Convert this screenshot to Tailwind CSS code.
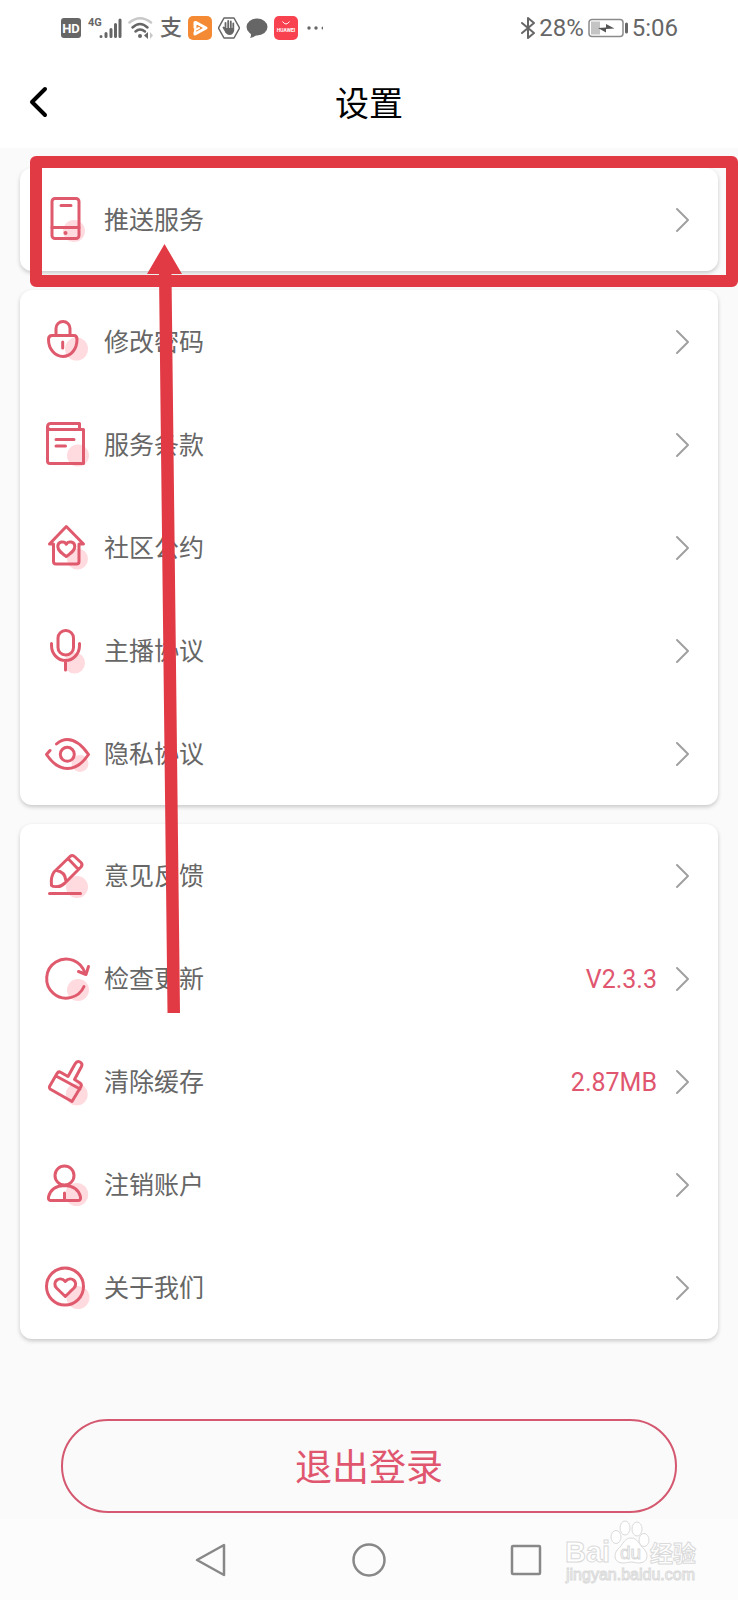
<!DOCTYPE html>
<html lang="zh-CN">
<head>
    <meta charset="UTF-8">
    <meta name="viewport" content="width=device-width, initial-scale=1.0">
    <title>设置</title>
    <script src="https://cdn.jsdelivr.net/npm/@tailwindcss/browser@4"></script>
</head>
<body class="min-h-screen flex flex-col bg-[#fafafa] font-[Roboto,'Noto_Sans_CJK_SC',sans-serif]">
    <!-- Shared icons -->
    <svg class="hidden">
        <symbol id="chevron" viewBox="0 0 16 28">
            <path d="M2 3l11 11L2 25" fill="none" stroke="#a0a0a0" stroke-width="2" stroke-linecap="round" stroke-linejoin="round"/>
        </symbol>
    </svg>

    <!-- Status bar -->
    <div class="bg-white h-14 px-[60px] flex items-center justify-between text-[#666]">
        <div class="flex items-center gap-[6px]">
            <svg class="w-[22px] h-6" viewBox="0 0 22 24">
                <rect x="1" y="2" width="20" height="20" rx="3" fill="#666"/>
                <text x="11" y="17" text-anchor="middle" font-family="Roboto" font-weight="700" font-size="13" fill="#fff">HD</text>
            </svg>
            <svg class="w-[34px] h-6" viewBox="0 0 34 24">
                <text x="0" y="10" font-family="Roboto" font-weight="700" font-size="11" fill="#666">4G</text>
                <path d="M13 20.500v0M18 20.500v-3M23 20.500v-7M27.500 20.500v-12M32 20.500v-16.500" stroke="#666" stroke-width="3" stroke-linecap="round"/>
            </svg>
            <svg class="w-[26px] h-6" viewBox="0 0 26 24" fill="none" stroke-width="2.500" stroke-linecap="round">
                <path d="M1.500 6.500Q12 -2 23 6.500" stroke="#c8c8c8"/>
                <path d="M4.500 11.500Q12 4.500 19.500 11.500M7.500 15.500Q12 11.500 17 15.500" stroke="#666"/>
                <circle cx="12" cy="20" r="2" fill="#666"/>
                <path d="M20 16v7l-4-3.500z" fill="#666"/>
                <path d="M22 16v7l3-3.500z" fill="#c8c8c8"/>
            </svg>
            <span class="w-[22px] text-[22px] leading-6 font-medium">支</span>
            <svg class="w-6 h-6" viewBox="0 0 24 24">
                <rect width="24" height="24" rx="5" fill="#f58a35"/>
                <path d="M7 6.500v5M7 16.500v1.500l11-6L8 6.500" fill="none" stroke="#fff" stroke-width="3" stroke-linecap="round" stroke-linejoin="round"/>
                <path d="M7 17v-3l4-2" fill="none" stroke="#fff" stroke-width="2" stroke-linecap="round"/>
            </svg>
            <svg class="w-[22px] h-6" viewBox="1 0 22 24">
                <path d="M7 2h10l5.500 10L17 22H7L1.500 12z" fill="none" stroke="#666" stroke-width="1.500" stroke-linejoin="round"/>
                <path d="M8.500 7v7M11.200 5v8M13.800 5.500v8M16.300 7.500v7M6.500 11.500l3 5" stroke="#666" stroke-width="1.800" stroke-linecap="round"/>
                <path d="M8 12h9v3q-1 4-4.500 4Q9.500 19 8 15z" fill="#666"/>
            </svg>
            <svg class="w-[22px] h-6" viewBox="0 0 22 24">
                <ellipse cx="11" cy="11" rx="10.500" ry="8.500" fill="#666"/>
                <path d="M4 16q2 3 0 6 5-1 7-4z" fill="#666"/>
            </svg>
            <svg class="w-6 h-6" viewBox="0 0 24 24">
                <rect width="24" height="24" rx="5" fill="#f8424f"/>
                <path d="M8.500 5.500q3.500 5 7 0" fill="none" stroke="#fff" stroke-width="1"/>
                <text x="12" y="16" text-anchor="middle" font-family="Roboto" font-weight="700" font-size="5" fill="#fff">HUAWEI</text>
            </svg>
            <svg class="w-7 h-6" viewBox="0 0 28 24" fill="#666">
                <circle cx="5" cy="12" r="1.700"/><circle cx="12" cy="12" r="1.700"/><path d="M19 10.500a1.500 1.500 0 0 0 0 3z"/>
            </svg>
        </div>
        <div class="flex items-center gap-[3px] text-2xl leading-6">
            <svg class="w-4 h-6" viewBox="0 0 16 24">
                <path d="M2 7l12 10-6 5V2l6 5L2 17" fill="none" stroke="#666" stroke-width="2" stroke-linejoin="round" stroke-linecap="round"/>
            </svg>
            <span>28%</span>
            <svg class="w-[42px] h-6" viewBox="0 0 42 24">
                <rect x="2" y="3.500" width="34" height="17" rx="3" fill="none" stroke="#8a8a8a" stroke-width="1.500"/>
                <rect x="4" y="5.500" width="9" height="13" fill="#c4c4c4"/>
                <path d="M11 12l8-.5V8l8.500 4.500-8.500.5v3.500z" fill="#555"/>
                <path d="M39.500 8v8" stroke="#666" stroke-width="3" stroke-linecap="round"/>
            </svg>
            <span>5:06</span>
        </div>
    </div>

    <!-- Header -->
    <header class="bg-white h-[92px] px-7 grid grid-cols-[24px_1fr_24px] items-center">
        <button type="button" aria-label="返回" class="w-6 h-9">
            <svg class="w-6 h-9" viewBox="0 0 24 36">
                <path d="M17 5L4 18l13 13" fill="none" stroke="#000" stroke-width="4" stroke-linecap="round" stroke-linejoin="round"/>
            </svg>
        </button>
        <h1 class="pt-1 text-center text-[34px] leading-10 text-black">设置</h1>
    </header>

    <!-- Settings -->
    <main class="relative flex-1 pt-5 pb-[6px] text-[25px] text-[#666]">
        <div class="px-5 flex flex-col gap-[19px]">
            <ul class="bg-white rounded-xl shadow-[0_2px_4px_rgba(0,0,0,0.2)]">
                <li>
                    <a href="#push" class="h-[103px] pl-6 pr-[27px] flex items-center">
                        <svg class="size-12" viewBox="0 0 48 48" fill="none" stroke="#e05a6d" stroke-width="3" stroke-linecap="round" stroke-linejoin="round">
                            <circle cx="30" cy="35" r="11" fill="#ffdbe0" stroke="none"/>
                            <rect x="8" y="2.500" width="27" height="40" rx="3"/>
                            <path d="M17 9.500h10M8 31.500h27"/>
                            <circle cx="21.500" cy="37" r="2" fill="#e05a6d" stroke="none"/>
                        </svg>
                        <span class="ml-3 pt-[2px] flex-1">推送服务</span>
                        <svg class="w-4 h-7"><use href="#chevron"/></svg>
                    </a>
                </li>
            </ul>

            <ul class="bg-white rounded-xl shadow-[0_2px_4px_rgba(0,0,0,0.2)]">
                <li>
                    <a href="#password" class="h-[103px] pl-6 pr-[27px] flex items-center">
                        <svg class="size-12" viewBox="0 0 48 48" fill="none" stroke="#e05a6d" stroke-width="3" stroke-linecap="round" stroke-linejoin="round">
                            <circle cx="32.500" cy="31" r="11.500" fill="#ffdbe0" stroke="none"/>
                            <path d="M12 17V10.500a7 7 0 0 1 14 0V17M8 17.500h22q3 0 3 4C33 31 27 38.500 19 38.500S4.500 31 4.500 21.500q0-4 3.500-4zM18.700 24v6"/>
                        </svg>
                        <span class="ml-3 pt-[2px] flex-1">修改密码</span>
                        <svg class="w-4 h-7"><use href="#chevron"/></svg>
                    </a>
                </li>
                <li>
                    <a href="#terms" class="h-[103px] pl-6 pr-[27px] flex items-center">
                        <svg class="size-12" viewBox="0 0 48 48" fill="none" stroke="#e05a6d" stroke-width="3" stroke-linecap="round" stroke-linejoin="round">
                            <circle cx="34" cy="34.500" r="11" fill="#ffdbe0" stroke="none"/>
                            <path d="M35.500 8V2.500H6.500a3 3 0 0 0 0 6H39.500V42.500H6a2.500 2.500 0 0 1-2.500-2.500V6M12 18.500h18M12 25h9.500"/>
                        </svg>
                        <span class="ml-3 pt-[2px] flex-1">服务条款</span>
                        <svg class="w-4 h-7"><use href="#chevron"/></svg>
                    </a>
                </li>
                <li>
                    <a href="#community" class="h-[103px] pl-6 pr-[27px] flex items-center">
                        <svg class="size-12" viewBox="0 0 48 48" fill="none" stroke="#e05a6d" stroke-width="3" stroke-linecap="round" stroke-linejoin="round">
                            <circle cx="33.500" cy="35" r="10.500" fill="#ffdbe0" stroke="none"/>
                            <path d="M9.500 20H5.500L22.300 2.500 39.500 20H35V37.500a2.500 2.500 0 0 1-2.500 2.500H12a2.500 2.500 0 0 1-2.500-2.500z"/>
                            <path d="M22.300 32.500c-5-3.500-8.500-6-8.500-10 0-5 6.500-6 8.500-2.300 2-3.700 8.500-2.700 8.500 2.300 0 4-3.500 6.500-8.500 10z"/>
                        </svg>
                        <span class="ml-3 pt-[2px] flex-1">社区公约</span>
                        <svg class="w-4 h-7"><use href="#chevron"/></svg>
                    </a>
                </li>
                <li>
                    <a href="#anchor" class="h-[103px] pl-6 pr-[27px] flex items-center">
                        <svg class="size-12" viewBox="0 0 48 48" fill="none" stroke="#e05a6d" stroke-width="3" stroke-linecap="round" stroke-linejoin="round">
                            <circle cx="30.500" cy="36" r="10.500" fill="#ffdbe0" stroke="none"/>
                            <rect x="14" y="3.500" width="15.500" height="24.500" rx="7.500"/>
                            <path d="M7.500 16.500v2a14 15 0 0 0 28 0v-2M21.500 33.500V43"/>
                        </svg>
                        <span class="ml-3 pt-[2px] flex-1">主播协议</span>
                        <svg class="w-4 h-7"><use href="#chevron"/></svg>
                    </a>
                </li>
                <li>
                    <a href="#privacy" class="h-[103px] pl-6 pr-[27px] flex items-center">
                        <svg class="size-12" viewBox="0 0 48 48" fill="none" stroke="#e05a6d" stroke-width="3" stroke-linecap="round" stroke-linejoin="round">
                            <circle cx="36" cy="33.500" r="8.500" fill="#ffdbe0" stroke="none"/>
                            <path d="M6 20.500L2.500 24.500Q12 38.500 23.500 38.500T44.500 24.500Q34 9.500 23.500 9.500 17.500 9.500 12.500 14"/>
                            <circle cx="23.300" cy="24.300" r="7"/>
                        </svg>
                        <span class="ml-3 pt-[2px] flex-1">隐私协议</span>
                        <svg class="w-4 h-7"><use href="#chevron"/></svg>
                    </a>
                </li>
            </ul>

            <ul class="bg-white rounded-xl shadow-[0_2px_4px_rgba(0,0,0,0.2)]">
                <li>
                    <a href="#feedback" class="h-[103px] pl-6 pr-[27px] flex items-center">
                        <svg class="size-12" viewBox="0 0 48 48" fill="none" stroke="#e05a6d" stroke-width="3" stroke-linecap="round" stroke-linejoin="round">
                            <circle cx="33" cy="35" r="11" fill="#ffdbe0" stroke="none"/>
                            <path d="M10 20L26 4.500q2.500-2 4.500 0l6.500 6q2 2 0 4.500L21 31q-4 3.500-7 3.500-5 .5-6.500-1Q6.500 25 10 20zM24.500 7l9.500 10M12.500 18.500q8.500 1 9.500 10.500M5.500 41.500h31"/>
                        </svg>
                        <span class="ml-3 pt-[2px] flex-1">意见反馈</span>
                        <svg class="w-4 h-7"><use href="#chevron"/></svg>
                    </a>
                </li>
                <li>
                    <a href="#update" class="h-[103px] pl-6 pr-[27px] flex items-center">
                        <svg class="size-12" viewBox="0 0 48 48" fill="none" stroke="#e05a6d" stroke-width="3" stroke-linecap="round" stroke-linejoin="round">
                            <circle cx="34" cy="35" r="11" fill="#ffdbe0" stroke="none"/>
                            <path d="M40 31.500A19.500 19.500 0 1 1 41 18.500M34.500 16.500L42 19.500 44.500 11.500"/>
                        </svg>
                        <span class="ml-3 pt-[2px] flex-1">检查更新</span>
                        <span class="mr-[18px] pt-[2px] text-[#e0566f]">V2.3.3</span>
                        <svg class="w-4 h-7"><use href="#chevron"/></svg>
                    </a>
                </li>
                <li>
                    <a href="#cache" class="h-[103px] pl-6 pr-[27px] flex items-center">
                        <svg class="size-12" viewBox="0 0 48 48" fill="none" stroke="#e05a6d" stroke-width="3" stroke-linecap="round" stroke-linejoin="round">
                            <circle cx="32.700" cy="36.500" r="11" fill="#ffdbe0" stroke="none"/>
                            <path d="M24 18.500L31 6q2-3.500 5-2t1.500 4.500L30.500 21.500 36 25q2 1.500 1 3.500L28 43.500 6 31q-1-1-.5-2.500L13 15.500q1.500-2.500 4-1zM12 18l24 13"/>
                        </svg>
                        <span class="ml-3 pt-[2px] flex-1">清除缓存</span>
                        <span class="mr-[18px] pt-[2px] text-[#e0566f]">2.87MB</span>
                        <svg class="w-4 h-7"><use href="#chevron"/></svg>
                    </a>
                </li>
                <li>
                    <a href="#account" class="h-[103px] pl-6 pr-[27px] flex items-center">
                        <svg class="size-12" viewBox="0 0 48 48" fill="none" stroke="#e05a6d" stroke-width="3" stroke-linecap="round" stroke-linejoin="round">
                            <circle cx="32.700" cy="33.500" r="11.500" fill="#ffdbe0" stroke="none"/>
                            <circle cx="20.500" cy="14.500" r="9.500"/>
                            <path d="M7 39.500q-3 0-2.500-3.500Q7 25 20.500 24.500 34 25 36.500 36q.5 3.500-2.500 3.500zM20.500 32v7"/>
                        </svg>
                        <span class="ml-3 pt-[2px] flex-1">注销账户</span>
                        <svg class="w-4 h-7"><use href="#chevron"/></svg>
                    </a>
                </li>
                <li>
                    <a href="#about" class="h-[103px] pl-6 pr-[27px] flex items-center">
                        <svg class="size-12" viewBox="0 0 48 48" fill="none" stroke="#e05a6d" stroke-width="3" stroke-linecap="round" stroke-linejoin="round">
                            <circle cx="34" cy="33.500" r="11.500" fill="#ffdbe0" stroke="none"/>
                            <circle cx="21" cy="22.500" r="18.500"/>
                            <path d="M21.300 32.500L12.500 24c-5-5.500 2.500-13 8.800-6.500 6.300-6.500 13.700 1 8.700 6.500z"/>
                        </svg>
                        <span class="ml-3 pt-[2px] flex-1">关于我们</span>
                        <svg class="w-4 h-7"><use href="#chevron"/></svg>
                    </a>
                </li>
            </ul>
        </div>

        <div class="mt-20 px-[61px]">
            <button type="button" class="w-full h-[94px] pt-[6px] rounded-full border-2 border-[#d4586f] text-[37px] text-[#e0566f]">退出登录</button>
        </div>

        <!-- Highlight box and arrow over the first row -->
        <div class="absolute top-2 left-[30px] right-0 h-[131px] border-12 border-[#e13a45] rounded-md pointer-events-none"></div>
        <svg class="absolute top-24 left-[147px] w-9 h-[770px] pointer-events-none" viewBox="0 0 36 770" fill="#e13a45">
            <path d="M17.500 0L35 30H24.500L33 769H20.500L12 30H0z"/>
        </svg>
    </main>

    <!-- Navigation bar -->
    <nav class="relative bg-[#fcfcfc] h-[82px] flex items-center justify-center gap-[122px]">
        <button type="button" aria-label="返回">
            <svg class="size-9" viewBox="0 0 36 36"><path d="M31 3v30L4 18z" fill="none" stroke="#888" stroke-width="2.500" stroke-linejoin="round"/></svg>
        </button>
        <button type="button" aria-label="主屏幕">
            <svg class="size-9" viewBox="0 0 36 36"><circle cx="18" cy="18" r="15.500" fill="none" stroke="#888" stroke-width="2.500"/></svg>
        </button>
        <button type="button" aria-label="最近任务">
            <svg class="size-9" viewBox="0 0 36 36"><rect x="3" y="4" width="28" height="28" rx="1" fill="none" stroke="#888" stroke-width="2.500"/></svg>
        </button>
        <svg class="absolute top-0 right-9 w-[138px] h-[70px]" viewBox="0 0 138 70" fill="#fff" stroke="#dadada" stroke-width="1" font-family="'Liberation Sans', 'Noto Sans CJK SC', sans-serif">
            <g font-weight="700">
                <text x="1" y="43" font-size="29">Bai</text>
                <text x="86" y="43" font-size="23">经验</text>
            </g>
            <ellipse cx="52" cy="18" rx="5" ry="6.500"/>
            <ellipse cx="61" cy="9" rx="5" ry="7"/>
            <ellipse cx="73" cy="10" rx="5" ry="7"/>
            <ellipse cx="80" cy="21" rx="5" ry="6.500"/>
            <path d="M67 19c-7 0-8 7-13 11-5 5-4 14 5 14 4 0 5-1 8-1s4 1 8 1c9 0 10-9 5-14-5-4-6-11-13-11z"/>
            <text x="56" y="40" font-size="19">du</text>
            <text x="2" y="61" font-size="16">jingyan.baidu.com</text>
        </svg>
    </nav>
</body>
</html>
